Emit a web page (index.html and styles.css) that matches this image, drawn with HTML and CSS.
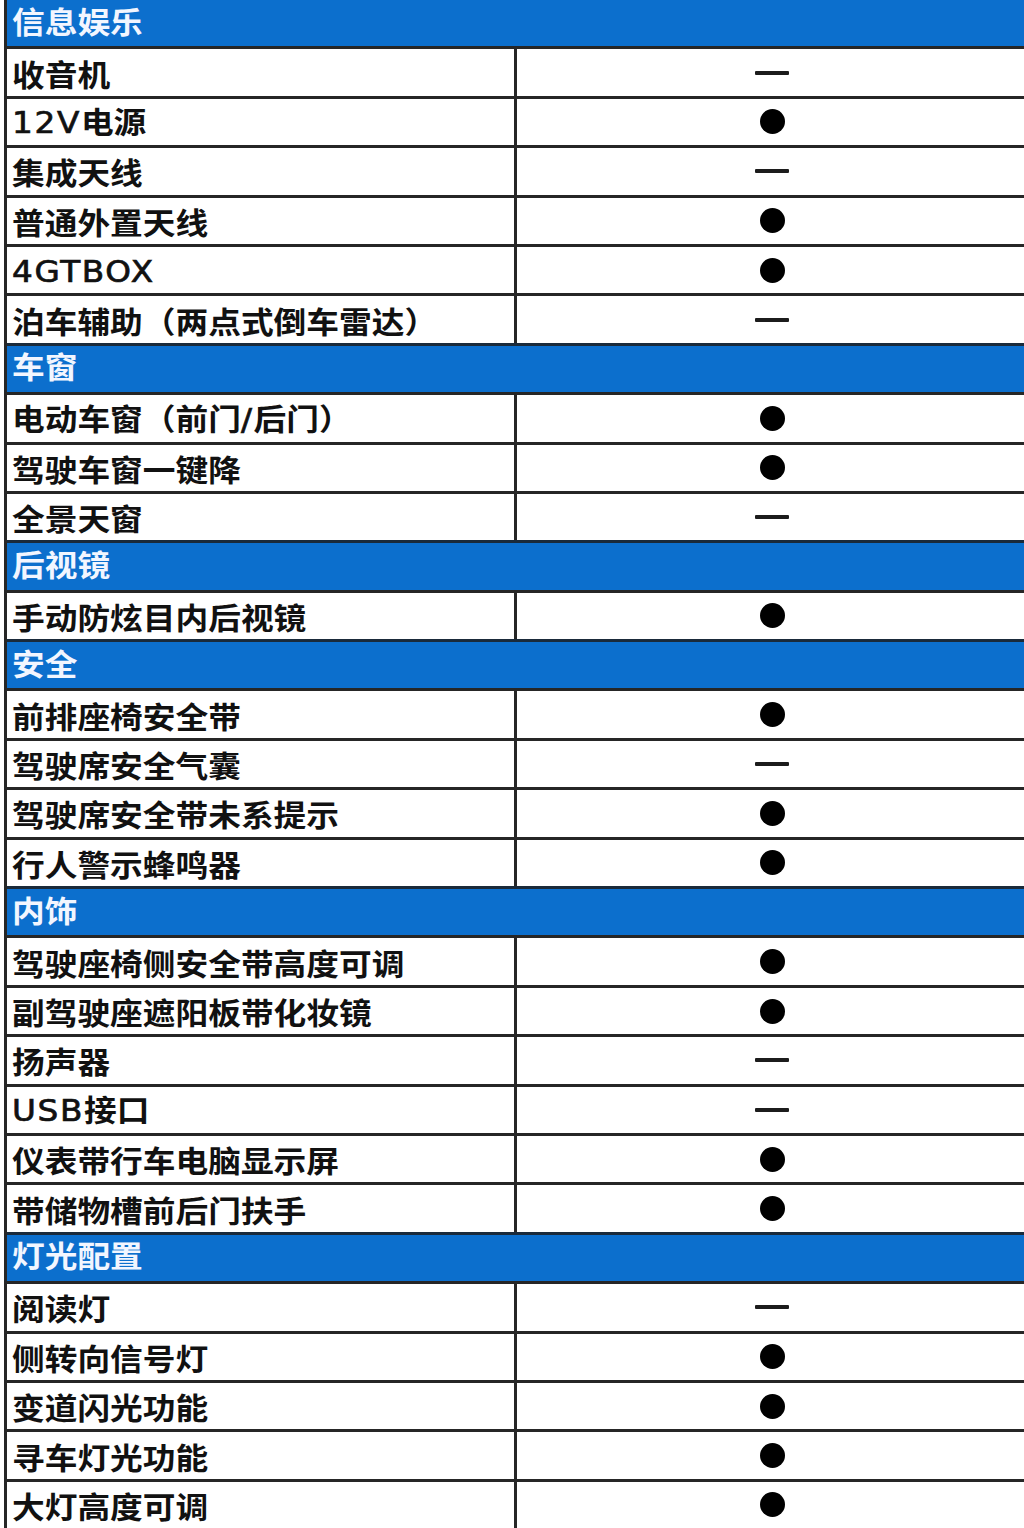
FILE: index.html
```html
<!DOCTYPE html>
<html lang="zh-CN">
<head>
<meta charset="utf-8">
<title>配置表</title>
<link rel="stylesheet" href="styles.css">
</head>
<body>
<div class="table">
  <div class="row head"><span class="t">信息娱乐</span></div>
  <div class="row"><div class="name"><span class="t">收音机</span></div><div class="val"><i class="dash"></i></div></div>
  <div class="row"><div class="name"><span class="t"><span class="lat">12V</span>电源</span></div><div class="val"><i class="dot"></i></div></div>
  <div class="row"><div class="name"><span class="t">集成天线</span></div><div class="val"><i class="dash"></i></div></div>
  <div class="row"><div class="name"><span class="t">普通外置天线</span></div><div class="val"><i class="dot"></i></div></div>
  <div class="row"><div class="name"><span class="t"><span class="lat">4GTBOX</span></span></div><div class="val"><i class="dot"></i></div></div>
  <div class="row"><div class="name"><span class="t">泊车辅助（两点式倒车雷达）</span></div><div class="val"><i class="dash"></i></div></div>
  <div class="row head"><span class="t">车窗</span></div>
  <div class="row"><div class="name"><span class="t">电动车窗（前门<span class="lat">/</span>后门）</span></div><div class="val"><i class="dot"></i></div></div>
  <div class="row"><div class="name"><span class="t">驾驶车窗一键降</span></div><div class="val"><i class="dot"></i></div></div>
  <div class="row"><div class="name"><span class="t">全景天窗</span></div><div class="val"><i class="dash"></i></div></div>
  <div class="row head"><span class="t">后视镜</span></div>
  <div class="row"><div class="name"><span class="t">手动防炫目内后视镜</span></div><div class="val"><i class="dot"></i></div></div>
  <div class="row head"><span class="t">安全</span></div>
  <div class="row"><div class="name"><span class="t">前排座椅安全带</span></div><div class="val"><i class="dot"></i></div></div>
  <div class="row"><div class="name"><span class="t">驾驶席安全气囊</span></div><div class="val"><i class="dash"></i></div></div>
  <div class="row"><div class="name"><span class="t">驾驶席安全带未系提示</span></div><div class="val"><i class="dot"></i></div></div>
  <div class="row"><div class="name"><span class="t">行人警示蜂鸣器</span></div><div class="val"><i class="dot"></i></div></div>
  <div class="row head"><span class="t">内饰</span></div>
  <div class="row"><div class="name"><span class="t">驾驶座椅侧安全带高度可调</span></div><div class="val"><i class="dot"></i></div></div>
  <div class="row"><div class="name"><span class="t">副驾驶座遮阳板带化妆镜</span></div><div class="val"><i class="dot"></i></div></div>
  <div class="row"><div class="name"><span class="t">扬声器</span></div><div class="val"><i class="dash"></i></div></div>
  <div class="row"><div class="name"><span class="t"><span class="lat">USB</span>接口</span></div><div class="val"><i class="dash"></i></div></div>
  <div class="row"><div class="name"><span class="t">仪表带行车电脑显示屏</span></div><div class="val"><i class="dot"></i></div></div>
  <div class="row"><div class="name"><span class="t">带储物槽前后门扶手</span></div><div class="val"><i class="dot"></i></div></div>
  <div class="row head"><span class="t">灯光配置</span></div>
  <div class="row"><div class="name"><span class="t">阅读灯</span></div><div class="val"><i class="dash"></i></div></div>
  <div class="row"><div class="name"><span class="t">侧转向信号灯</span></div><div class="val"><i class="dot"></i></div></div>
  <div class="row"><div class="name"><span class="t">变道闪光功能</span></div><div class="val"><i class="dot"></i></div></div>
  <div class="row"><div class="name"><span class="t">寻车灯光功能</span></div><div class="val"><i class="dot"></i></div></div>
  <div class="row"><div class="name"><span class="t">大灯高度可调</span></div><div class="val"><i class="dot"></i></div></div>
</div>
</body>
</html>
```

FILE: styles.css
```css
html, body {
  margin: 0;
  padding: 0;
  background: #ffffff;
  overflow: hidden;
}

body {
  font-family: "Noto Sans CJK SC", "DejaVu Sans", sans-serif;
  color: #111111;
}

.table {
  margin: -3px 0 0 4px;
  width: 1020px;
  border-left: 3px solid #262626;
}

.row {
  box-sizing: border-box;
  height: 49.4px;
  border-top: 3px solid #262626;
  display: flex;
  align-items: stretch;
}

.row.head {
  background: #0c6fcd;
  align-items: center;
  padding-left: 5px;
  border-top-color: #1a2a3a;
}

.row.head .t {
  color: #f2f6ff;
  font-weight: 700;
  margin-top: 0;
  margin-bottom: 7px;
}

.name {
  box-sizing: border-box;
  width: 507px;
  padding-left: 5px;
  display: flex;
  align-items: center;
}

.val {
  flex: 1;
  border-left: 3px solid #262626;
  display: flex;
  align-items: center;
  justify-content: center;
}

.t {
  display: inline-block;
  font-size: 30px;
  line-height: 1;
  font-weight: 700;
  white-space: nowrap;
  transform: scaleX(1.09);
  transform-origin: left center;
  margin-top: 0;
}

.lat {
  font-family: "DejaVu Sans", sans-serif;
  font-weight: 400;
  letter-spacing: 1.5px;
  font-size: 30px;
  -webkit-text-stroke: 0.7px #111111;
}

.dot {
  display: block;
  width: 25px;
  height: 25px;
  border-radius: 50%;
  background: #000000;
}

.dash {
  display: block;
  width: 34px;
  height: 4px;
  background: #1c1c1c;
  border-radius: 1px;
}
```
